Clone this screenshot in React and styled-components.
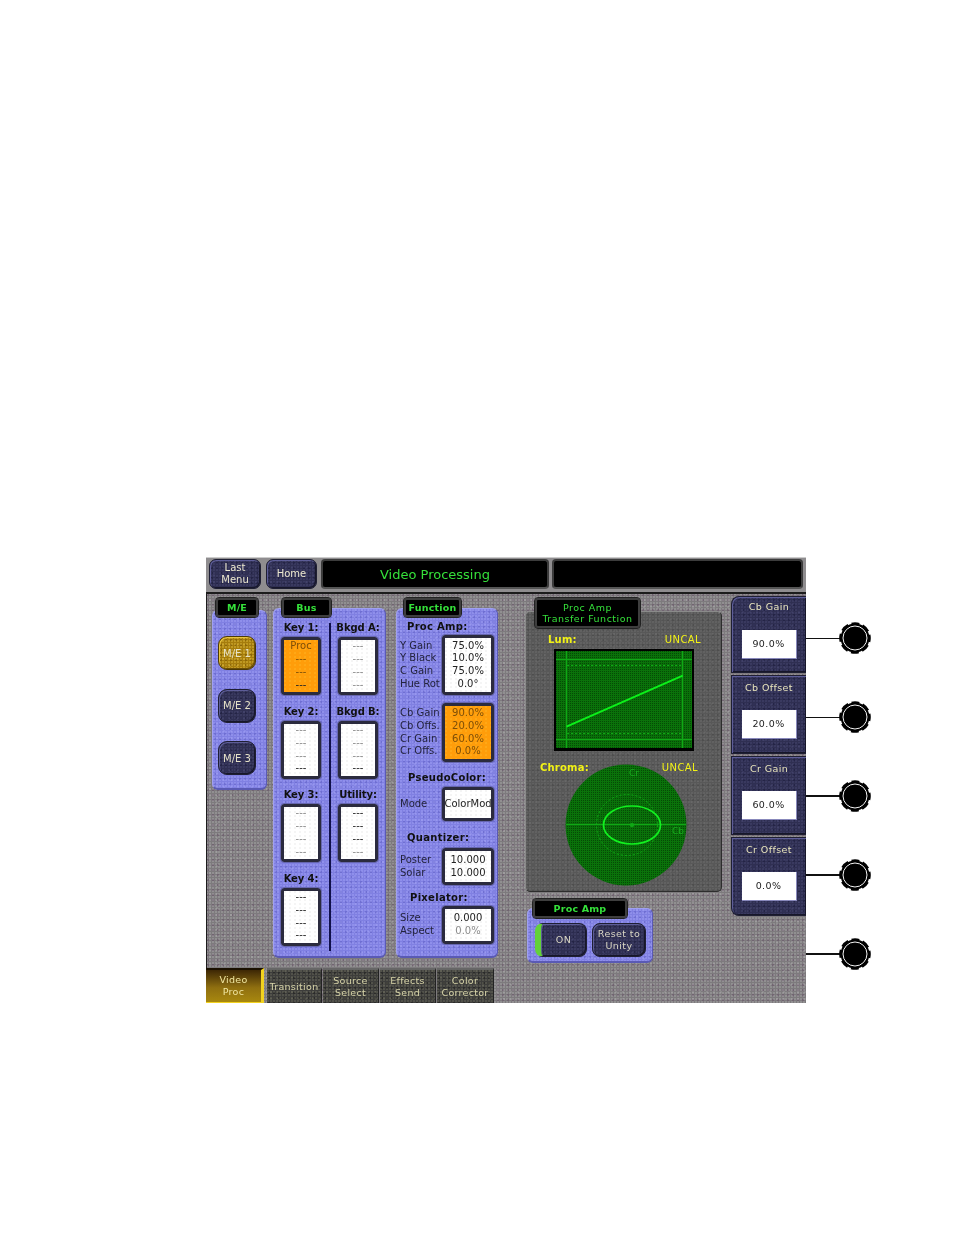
import React from "react";
import styled, { createGlobalStyle, css } from "styled-components";

const GlobalStyle = createGlobalStyle`
  html, body {
    margin: 0;
    background: #fff;
    font-family: "DejaVu Sans", sans-serif;
  }
`;

// dithered look of the old 256 colour screen grab
const grain = (light, dark) => css`
  background-image:
    radial-gradient(circle at 1px 1px, ${light} 0.7px, transparent 1px),
    radial-gradient(circle at 2px 3px, ${dark} 0.7px, transparent 1px),
    radial-gradient(circle at 4px 1px, ${light} 0.6px, transparent 1px);
  background-size: 3px 3px, 5px 5px, 7px 7px;
`;

const Page = styled.div`
  display: flex;
  width: 954px;
  height: 1235px;
  padding: 557px 0 0 206px;
  box-sizing: border-box;
  overflow: hidden;
`;

const Screen = styled.div`
  width: 600px;
  height: 446px;
  display: flex;
  flex-direction: column;
  background-color: #7d7a7d;
  ${grain("rgba(255,255,255,.16)", "rgba(70,20,70,.22)")}
  filter: blur(0.35px);
`;

const TopBar = styled.div`
  height: 35px;
  box-sizing: border-box;
  padding: 1px 3px 3px;
  display: flex;
  gap: 5px;
  background: #8f8d8f;
  border-top: 1px solid #ccc;
`;

const navyFace = css`
  background-color: #2f2f52;
  ${grain("rgba(140,140,200,.12)", "rgba(10,10,40,.3)")}
  border: 1px solid #1f1f33;
  box-shadow: inset 1px 1px 0 #5d5d98, inset -1px -1px 0 #17172a;
`;

const MenuButton = styled.div`
  ${navyFace}
  width: ${(p) => p.$w}px;
  border-radius: 7px;
  box-sizing: border-box;
  display: flex;
  align-items: center;
  justify-content: center;
  text-align: center;
  color: #ece8cf;
  font-size: 10px;
  line-height: 12px;
`;

const TitleBox = styled.div`
  flex: ${(p) => (p.$wide ? "0 0 251px" : "0 0 228px")};
  margin-left: ${(p) => (p.$wide ? "-2px" : "-1px")};
  background: #000;
  border: 2px solid #3c3c3c;
  border-bottom-color: #555;
  border-radius: 4px;
  box-sizing: border-box;
  display: flex;
  align-items: center;
  justify-content: center;
  color: #35e03a;
  font-size: 13px;
`;

const Main = styled.div`
  height: 376px;
  display: flex;
  align-items: flex-start;
  padding: 4px 0 0 6px;
  box-sizing: border-box;
  border-top: 2px solid #1c1c1c;
  box-shadow: inset 1px 0 0 #1c1c1c;
`;

const Col = styled.div`
  width: ${(p) => p.$w}px;
  margin-left: ${(p) => p.$ml || 0}px;
  display: flex;
  flex-direction: column;
`;

const Tab = styled.div`
  position: relative;
  z-index: 1;
  align-self: flex-start;
  margin-top: ${(p) => p.$mt || 0}px;
  margin-left: ${(p) => p.$ml}px;
  margin-bottom: ${(p) => p.$over}px;
  width: ${(p) => p.$w}px;
  box-sizing: border-box;
  padding: 2px 0;
  background: #000;
  border: 2px solid #3e3e3e;
  outline: 1px solid #222;
  border-radius: 3px;
  color: #35e03a;
  font-size: 9.5px;
  font-weight: bold;
  line-height: 11px;
  letter-spacing: 0.2px;
  text-align: center;
`;

const TabPlain = styled.span`
  font-weight: normal;
  letter-spacing: 0.5px;
`;

const Panel = styled.div`
  background-color: #8080e2;
  ${grain("rgba(180,180,255,.3)", "rgba(70,70,170,.3)")}
  border-radius: 6px;
  border: 1px solid #a0a0f0;
  border-right-color: #5a5ab4;
  border-bottom: 2px solid #5a5ab4;
  box-sizing: border-box;
  height: ${(p) => p.$h}px;
`;

const MePanel = styled(Panel)`
  display: flex;
  flex-direction: column;
  gap: 18.5px;
  padding: 25px 0 0 5px;
`;

const MeButton = styled.div`
  ${navyFace}
  width: 38px;
  height: 34px;
  box-sizing: border-box;
  border-radius: 9px;
  display: flex;
  align-items: center;
  justify-content: center;
  font-size: 10px;
  color: #e6e2c8;
  ${(p) =>
    p.$on &&
    css`
      background-color: #a57c0c;
      ${grain("rgba(255,220,90,.3)", "rgba(80,50,0,.3)")}
      border-color: #4d3a05;
      box-shadow: inset 1px 1px 0 #e8c440, inset -1px -1px 0 #6b4f06;
    `}
`;

const BusGrid = styled(Panel)`
  position: relative;
  display: grid;
  grid-template-columns: 56px 56px;
  grid-auto-rows: 83.5px;
  padding-top: 9px;
`;

const BusDivider = styled.div`
  position: absolute;
  left: 55px;
  top: 14px;
  bottom: 5px;
  width: 2px;
  background: #10104a;
`;

const BusCell = styled.div`
  width: 40px;
  margin-left: ${(p) => (p.$right ? 8 : 7)}px;
  display: flex;
  flex-direction: column;
  align-items: center;
`;

const Label = styled.div`
  color: #111;
  font-size: 10px;
  font-weight: bold;
  line-height: 20px;
  height: 18px;
  letter-spacing: 0.3px;
  white-space: nowrap;
  ${(p) => p.$left && `margin-left: ${p.$left}px;`}
  ${(p) => p.$top && `margin-top: ${p.$top}px;`}
`;

const BusLabel = styled(Label)`
  height: 19px;
  letter-spacing: -0.1px;
`;

const ValueBox = styled.div`
  width: ${(p) => p.$w || 52}px;
  height: ${(p) => p.$h || 58}px;
  box-sizing: border-box;
  border: 3px solid #2b2b3e;
  outline: 1px solid #6666b0;
  border-radius: 3px;
  background-color: ${(p) => (p.$orange ? "#ff9d0a" : "#fff")};
  background-image: radial-gradient(circle at 1px 1px, ${(p) => (p.$orange ? "rgba(255,230,90,.5)" : "rgba(0,0,0,.12)")} 0.5px, transparent 0.8px);
  background-size: 5px 4px;
  display: flex;
  flex-direction: column;
  justify-content: center;
  align-items: center;
  font-size: 10px;
  line-height: 12.6px;
  color: #222;
`;

const BusBox = styled(ValueBox)`
  width: 40px;
  line-height: 12.8px;
`;

const BoxLine = styled.span`
  color: ${(p) => (p.$dim ? "#8b8b8b" : "inherit")};
  ${(p) => p.$dim && p.$orange && "color: #7d4e08;"}
`;

const FnBody = styled(Panel)`
  display: flex;
  flex-direction: column;
  padding: 8px 3px 0 3px;
`;

const FnRow = styled.div`
  display: flex;
  justify-content: space-between;
  align-items: center;
  margin-top: ${(p) => p.$top || 0}px;
`;

const FnNames = styled.div`
  font-size: 10px;
  line-height: 12.6px;
  color: #23233d;
  white-space: nowrap;
`;

const ScopePanel = styled.div`
  background-color: #585858;
  ${grain("rgba(255,255,255,.06)", "rgba(0,0,0,.12)")}
  border: 1px solid #2d2d2d;
  border-top-color: #8a8a8a;
  border-left-color: #8a8a8a;
  border-radius: 5px;
  height: 281px;
  box-sizing: border-box;
  padding: 22px 0 0;
  display: flex;
  flex-direction: column;
  align-items: center;
`;

const ScopeHead = styled.div`
  align-self: stretch;
  display: flex;
  justify-content: space-between;
  padding: ${(p) => p.$pad};
  color: #f2f216;
  font-size: 10px;
  font-weight: bold;
  line-height: 12px;
  letter-spacing: 0.2px;
`;

const ScopeText = styled.span`
  font-weight: normal;
  letter-spacing: 0.4px;
`;

const LumSvg = styled.svg`
  display: block;
  margin-top: 3px;
`;

const ChromaSvg = styled.svg`
  display: block;
  margin: -10px 0 0 4px;
`;

const ProcPanel = styled(Panel)`
  width: 126px;
  margin-left: 2px;
  display: flex;
  gap: 5px;
  padding: 14px 0 0 7px;
`;

const ProcButton = styled.div`
  ${navyFace}
  width: ${(p) => p.$w}px;
  height: 34px;
  box-sizing: border-box;
  border-radius: 8px;
  display: flex;
  align-items: center;
  justify-content: center;
  text-align: center;
  color: #d9d6c4;
  font-size: 9.5px;
  line-height: 12px;
  letter-spacing: 0.4px;
  ${(p) => p.$lit && "border-left: 6px solid #63d13a;"}
`;

const SoftKeys = styled(Col)`
  gap: 2px;
  margin-top: -2px;
`;

const SoftKey = styled.div`
  ${navyFace}
  height: ${(p) => p.$h}px;
  box-sizing: border-box;
  border-right: 0;
  border-radius: ${(p) => (p.$first ? "8px 0 0 0" : p.$last ? "0 0 0 8px" : "0")};
  display: flex;
  flex-direction: column;
  align-items: center;
  padding-top: ${(p) => (p.$first ? 3 : 5)}px;
  color: #e9e5bd;
  font-size: 9.5px;
  line-height: 14px;
  letter-spacing: 0.4px;
`;

const SoftValue = styled.div`
  width: 54px;
  height: 28px;
  margin-top: ${(p) => (p.$first ? 16 : 15)}px;
  background: #fff;
  border-bottom: 1px solid #8888bb;
  border-right: 1px solid #8888bb;
  display: flex;
  align-items: center;
  justify-content: center;
  color: #222;
  font-size: 9.5px;
`;

const BottomTabs = styled.div`
  display: flex;
  height: 35px;
  gap: 1px;
`;

const BottomTab = styled.div`
  width: ${(p) => p.$w}px;
  margin-right: ${(p) => p.$gap || 0}px;
  box-sizing: border-box;
  background-color: #3d3d3b;
  ${grain("rgba(210,210,170,.14)", "rgba(0,0,0,.3)")}
  border-top: 2px solid #666;
  border-right: 1px solid #222;
  display: flex;
  align-items: center;
  justify-content: center;
  text-align: center;
  color: #d6d3a8;
  font-size: 9.5px;
  line-height: 12px;
  letter-spacing: 0.3px;
  ${(p) =>
    p.$active &&
    css`
      background: linear-gradient(#3d2705, #8f6f10 55%, #a8880f);
      border-top: 2px solid #1a1000;
      border-right: 3px solid #f2d21e;
      border-bottom: 1px solid #f2d21e;
      color: #f0e6a0;
    `}
`;

const KnobColumn = styled.div`
  padding-top: 42px;
  display: grid;
  grid-auto-rows: 78.9px;
`;

const KnobRow = styled.div`
  display: flex;
  align-items: center;
`;

const Lead = styled.div`
  width: 33.5px;
  height: ${(p) => (p.$thick ? 2 : 1.5)}px;
  background: #111;
`;

const KnobSvg = styled.svg`
  display: block;
  margin-left: -1px;
`;

const Knob = () => (
  <KnobSvg width="32" height="32" viewBox="0 0 32 32">
    <circle cx="16" cy="16" r="14.4" fill="#000" />
    <circle cx="16" cy="16" r="14.8" fill="none" stroke="#000" strokeWidth="2" strokeDasharray="8 3.62" strokeDashoffset="4" />
    <circle cx="16" cy="16" r="12" fill="none" stroke="#f4f4f4" strokeWidth="1" />
  </KnobSvg>
);

const Mesh = ({ id }) => (
  <pattern id={id} width="2" height="2" patternUnits="userSpaceOnUse">
    <rect width="2" height="2" fill="#0a720a" />
    <rect width="1" height="1" fill="#054a05" />
  </pattern>
);

const LumScope = () => (
  <LumSvg width="140" height="102" viewBox="0 0 140 102">
    <defs>
      <Mesh id="lumMesh" />
    </defs>
    <rect width="140" height="102" fill="#000" />
    <rect x="2" y="2" width="136" height="97" fill="url(#lumMesh)" />
    <g stroke="#10a816" strokeWidth="1" fill="none">
      <path d="M2 10.5H138M2 90.5H138M12.5 2V99M128.5 2V99" />
      <path d="M13 16.5H127M13 84.5H127" strokeDasharray="2 2" />
    </g>
    <path d="M12.5 77.7L128.7 26.7" stroke="#0cf01a" strokeWidth="2" fill="none" />
  </LumSvg>
);

const ChromaScope = () => (
  <ChromaSvg width="122" height="122" viewBox="0 0 122 122">
    <defs>
      <Mesh id="chromaMesh" />
    </defs>
    <circle cx="61" cy="61" r="60.5" fill="url(#chromaMesh)" />
    <g stroke="#10a816" strokeWidth="1" fill="none">
      <path d="M1 60.5H121" />
      <circle cx="62" cy="61" r="30.5" strokeDasharray="2 2" />
      <circle cx="67" cy="61" r="1.8" fill="#10a816" />
    </g>
    <ellipse cx="67" cy="61" rx="28.5" ry="19" fill="none" stroke="#12f020" strokeWidth="1.7" />
    <text x="64" y="12" fontSize="9" fill="#18a81e" fontFamily="DejaVu Sans">Cr</text>
    <text x="107" y="70" fontSize="9" fill="#18a81e" fontFamily="DejaVu Sans">Cb</text>
  </ChromaSvg>
);

const Lines = ({ rows, orange }) =>
  rows.map(([text, dim], i) => (
    <BoxLine key={i} $dim={dim} $orange={orange}>
      {text}
    </BoxLine>
  ));

const dash = (pattern) => pattern.split("").map((c) => ["---", c === "d"]);

const busCells = [
  { label: "Key 1:", rows: [["Proc", true], ["---", true], ["---", true], ["---", false]], orange: true },
  { label: "Bkgd A:", rows: dash("dddd"), right: true },
  { label: "Key 2:", rows: dash("dddb") },
  { label: "Bkgd B:", rows: dash("dddb"), right: true },
  { label: "Key 3:", rows: dash("dddd") },
  { label: "Utility:", rows: dash("bbbd"), right: true },
  { label: "Key 4:", rows: dash("bbbb") },
];

const softKeys = [
  { name: "Cb Gain", value: "90.0%", h: 77, first: true },
  { name: "Cb Offset", value: "20.0%", h: 79 },
  { name: "Cr Gain", value: "60.0%", h: 79 },
  { name: "Cr Offset", value: "0.0%", h: 79, last: true },
];

export default function App() {
  return (
    <Page>
      <GlobalStyle />
      <Screen>
        <TopBar>
          <MenuButton $w={52}>Last<br />Menu</MenuButton>
          <MenuButton $w={51}>Home</MenuButton>
          <TitleBox>Video Processing</TitleBox>
          <TitleBox $wide />
        </TopBar>

        <Main>
          <Col $w={55}>
            <Tab $ml={4} $w={42} $over={-7}>M/E</Tab>
            <MePanel $h={180}>
              <MeButton $on>M/E 1</MeButton>
              <MeButton>M/E 2</MeButton>
              <MeButton>M/E 3</MeButton>
            </MePanel>
          </Col>

          <Col $w={113} $ml={6}>
            <Tab $ml={9} $w={49} $over={-9}>Bus</Tab>
            <BusGrid $h={350}>
              <BusDivider />
              {busCells.map((cell) => (
                <BusCell key={cell.label} $right={cell.right}>
                  <BusLabel>{cell.label}</BusLabel>
                  <BusBox $orange={cell.orange}>
                    <Lines rows={cell.rows} orange={cell.orange} />
                  </BusBox>
                </BusCell>
              ))}
            </BusGrid>
          </Col>

          <Col $w={102} $ml={10}>
            <Tab $ml={8} $w={57} $over={-9}>Function</Tab>
            <FnBody $h={350}>
              <Label $left={7}>Proc Amp:</Label>
              <FnRow>
                <FnNames>Y Gain<br />Y Black<br />C Gain<br />Hue Rot</FnNames>
                <ValueBox $h={60}>
                  <span>75.0%</span><span>10.0%</span><span>75.0%</span><span>0.0°</span>
                </ValueBox>
              </FnRow>
              <FnRow $top={8}>
                <FnNames>Cb Gain<br />Cb Offs.<br />Cr Gain<br />Cr Offs.</FnNames>
                <ValueBox $h={59} $orange>
                  <Lines orange rows={[["90.0%", true], ["20.0%", true], ["60.0%", true], ["0.0%", true]]} />
                </ValueBox>
              </FnRow>
              <Label $left={8} $top={6}>PseudoColor:</Label>
              <FnRow $top={1}>
                <FnNames>Mode</FnNames>
                <ValueBox $h={34}>ColorMod</ValueBox>
              </FnRow>
              <Label $left={7} $top={7}>Quantizer:</Label>
              <FnRow $top={2}>
                <FnNames>Poster<br />Solar</FnNames>
                <ValueBox $h={37}><span>10.000</span><span>10.000</span></ValueBox>
              </FnRow>
              <Label $left={10} $top={3}>Pixelator:</Label>
              <FnRow>
                <FnNames>Size<br />Aspect</FnNames>
                <ValueBox $h={38}>
                  <Lines rows={[["0.000", false], ["0.0%", true]]} />
                </ValueBox>
              </FnRow>
            </FnBody>
          </Col>

          <Col $w={197} $ml={27}>
            <Tab $ml={10} $w={105} $over={-17}>
              <TabPlain>Proc Amp<br />Transfer Function</TabPlain>
            </Tab>
            <ScopePanel>
              <ScopeHead $pad="0 20px 0 22px">
                <span>Lum:</span>
                <ScopeText>UNCAL</ScopeText>
              </ScopeHead>
              <LumScope />
              <ScopeHead $pad="11px 23px 0 14px">
                <span>Chroma:</span>
                <ScopeText>UNCAL</ScopeText>
              </ScopeHead>
              <ChromaScope />
            </ScopePanel>
            <Tab $mt={7} $ml={8} $w={94} $over={-10}>Proc Amp</Tab>
            <ProcPanel $h={55}>
              <ProcButton $lit $w={52}>ON</ProcButton>
              <ProcButton $w={54}>Reset to<br />Unity</ProcButton>
            </ProcPanel>
          </Col>

          <SoftKeys $w={75} $ml={9}>
            {softKeys.map((key) => (
              <SoftKey key={key.name} $h={key.h} $first={key.first} $last={key.last}>
                {key.name}
                <SoftValue $first={key.first}>{key.value}</SoftValue>
              </SoftKey>
            ))}
          </SoftKeys>
        </Main>

        <BottomTabs>
          <BottomTab $w={58} $active $gap={2}>Video<br />Proc</BottomTab>
          <BottomTab $w={55}>Transition</BottomTab>
          <BottomTab $w={56}>Source<br />Select</BottomTab>
          <BottomTab $w={56}>Effects<br />Send</BottomTab>
          <BottomTab $w={57}>Color<br />Corrector</BottomTab>
        </BottomTabs>
      </Screen>

      <KnobColumn>
        {[0, 1, 2, 3, 4].map((i) => (
          <KnobRow key={i}>
            <Lead $thick={i === 2} />
            <Knob />
          </KnobRow>
        ))}
      </KnobColumn>
    </Page>
  );
}
